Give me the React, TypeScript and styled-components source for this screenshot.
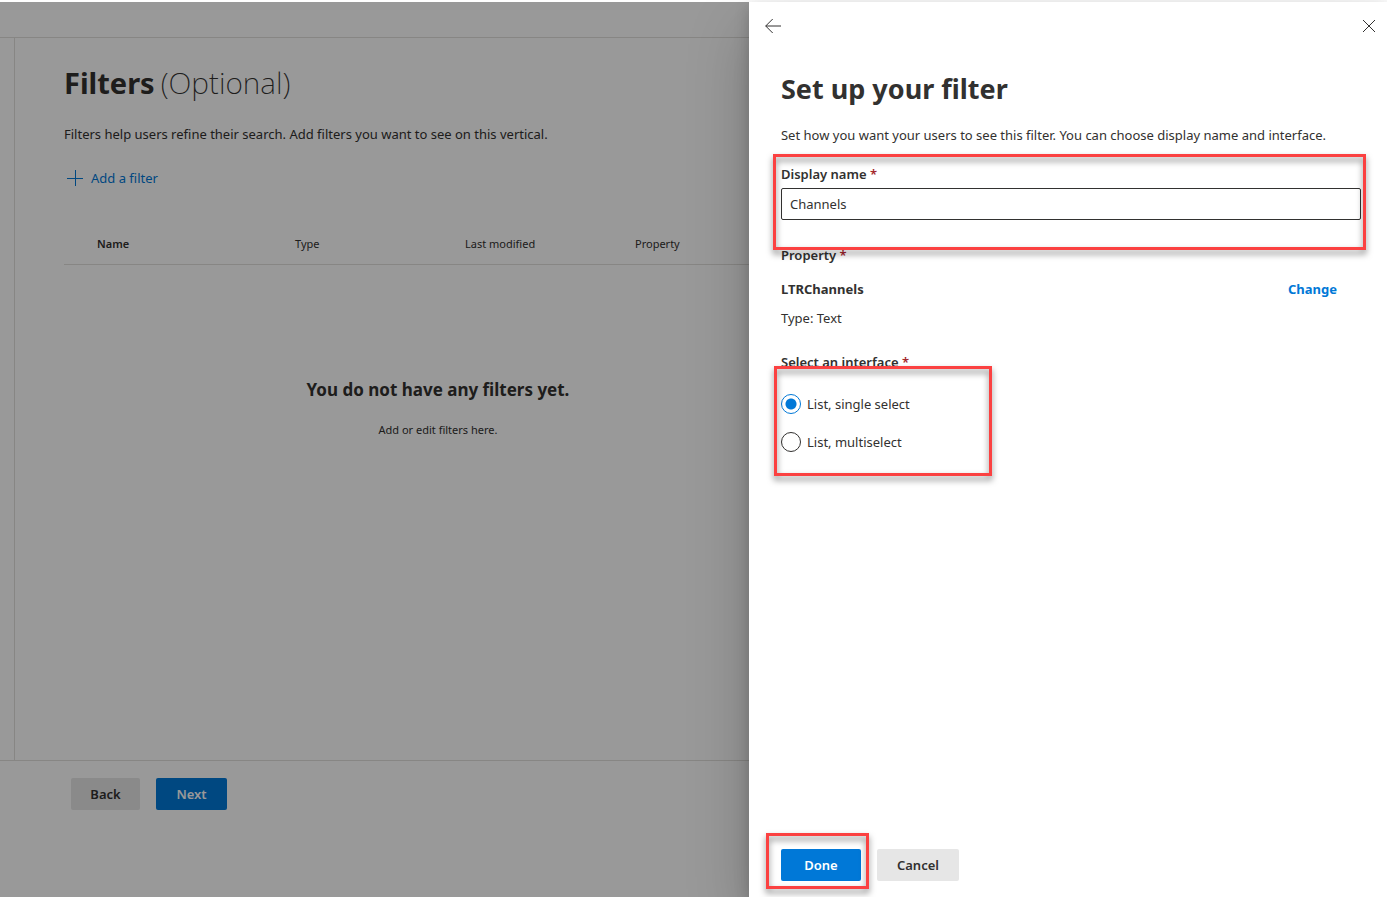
import React, { useState } from "react";
import styled, { createGlobalStyle } from "styled-components";

const GlobalStyle = createGlobalStyle`
  *, *::before, *::after { box-sizing: border-box; }
  body {
    margin: 0;
    background: #fff;
    color: #323130;
    font-family: "Noto Sans", "Open Sans", sans-serif;
    font-size: 13px;
    line-height: 20px;
  }
  h1, h2, h3, p { margin: 0; }
  button, input { font: inherit; color: inherit; }
`;

const Screen = styled.div`
  position: relative;
  display: flex;
  flex-direction: column;
  min-height: 100vh;
  overflow: hidden;
`;

const TopStrip = styled.div`
  height: 2px;
  background: #fff;
`;

const Wizard = styled.div`
  flex: 1;
  display: flex;
  flex-direction: column;
`;

const WizardHeader = styled.header`
  height: 36px;
  border-bottom: 1px solid #e1dfdd;
`;

const WizardBody = styled.main`
  flex: 1;
  margin-left: 14px;
  padding: 24px 0 0 49px;
  border-left: 1px solid #e1dfdd;
`;

const WizardTitle = styled.h1`
  display: flex;
  align-items: baseline;
  gap: 6px;
  font-size: 29px;
  line-height: 42px;
  font-weight: 700;
`;

const Light = styled.span`
  font-size: 30px;
  font-weight: 200;
`;

const Intro = styled.p`
  margin-top: 20px;
`;

const AddButton = styled.button`
  display: flex;
  align-items: center;
  gap: 8px;
  height: 40px;
  margin-top: 14px;
  padding: 0 3px;
  border: 0;
  background: none;
  color: #0078d7;
`;

const FilterList = styled.section`
  max-width: 748px;
`;

const Table = styled.table`
  width: 100%;
  margin-top: 24px;
  border-collapse: collapse;
  table-layout: fixed;
  font-size: 11px;
`;

const HeadCell = styled.th<{ $width?: number; $strong?: boolean; $indent?: boolean }>`
  width: ${(p) => (p.$width ? `${p.$width}px` : "auto")};
  height: 42px;
  padding: 2px 0 0 ${(p) => (p.$indent ? 33 : 0)}px;
  border-bottom: 1px solid #e1dfdd;
  text-align: left;
  font-weight: ${(p) => (p.$strong ? 600 : 400)};
`;

const Empty = styled.div`
  padding-top: 112px;
  text-align: center;
`;

const EmptyTitle = styled.h3`
  font-size: 17px;
  line-height: 26px;
  font-weight: 700;
`;

const EmptyText = styled.p`
  margin-top: 17px;
  font-size: 11px;
`;

const WizardFooter = styled.footer`
  display: flex;
  gap: 16px;
  height: 137px;
  padding: 17px 71px;
  border-top: 1px solid #e1dfdd;
`;

const Button = styled.button<{ $primary?: boolean; $width: number }>`
  width: ${(p) => p.$width}px;
  height: 32px;
  padding: 0;
  border: 0;
  border-radius: 2px;
  background: ${(p) => (p.$primary ? "#0078d7" : "#e6e6e6")};
  color: ${(p) => (p.$primary ? "#fff" : "#323130")};
  font-weight: 600;
`;

const Overlay = styled.div`
  position: absolute;
  inset: 2px 0 0;
  background: rgba(0, 0, 0, 0.4);
`;

const Panel = styled.aside`
  position: absolute;
  inset: 2px 0 0 auto;
  width: 46%;
  display: flex;
  flex-direction: column;
  background: #fff;
  box-shadow: 0 26px 58px rgba(0, 0, 0, 0.22), 0 5px 14px rgba(0, 0, 0, 0.18);
`;

const PanelNav = styled.div`
  display: flex;
  justify-content: space-between;
  padding: 8px 2px 0 8px;
`;

const IconButton = styled.button`
  display: flex;
  align-items: center;
  justify-content: center;
  width: 32px;
  height: 32px;
  padding: 0;
  border: 0;
  background: none;
`;

const PanelBody = styled.div`
  flex: 1;
  padding: 27px 26px 0 32px;
`;

const PanelTitle = styled.h2`
  font-size: 27px;
  line-height: 40px;
  font-weight: 700;
`;

const PanelIntro = styled.p`
  margin-top: 16px;
`;

const Field = styled.div`
  position: relative;
  margin-top: 19px;
`;

const Label = styled.label`
  display: block;
  font-weight: 600;
`;

const Star = styled.span`
  color: #a4262c;
`;

const TextInput = styled.input`
  display: block;
  width: 100%;
  height: 32px;
  margin-top: 4px;
  padding: 0 8px;
  border: 1px solid #323130;
  border-radius: 2px;
  background: #fff;
  outline: 0;
`;

const Property = styled.section`
  margin-top: 25px;
`;

const GroupTitle = styled.h3`
  font-size: 13px;
  line-height: 20px;
  font-weight: 600;
`;

const PropertyRow = styled.div`
  display: flex;
  justify-content: space-between;
  margin-top: 14px;
  padding-right: 24px;
  font-weight: 700;
`;

const ChangeLink = styled.a`
  color: #0078d7;
  text-decoration: none;
`;

const PropertyType = styled.p`
  margin-top: 9px;
`;

const Choices = styled.section`
  margin-top: 24px;
`;

const Options = styled.div`
  position: relative;
  display: flex;
  flex-direction: column;
  align-items: flex-start;
  gap: 18px;
  width: 203px;
  padding-top: 22px;
`;

const Option = styled.label`
  display: flex;
  align-items: center;
  gap: 6px;
`;

const Radio = styled.input`
  appearance: none;
  width: 20px;
  height: 20px;
  margin: 0;
  border: 1px solid #323130;
  border-radius: 50%;
  background: #fff;

  &:checked {
    border-color: #0078d7;
    background: radial-gradient(circle, #0078d7 5px, #fff 6px);
  }
`;

const PanelFooter = styled.footer`
  display: flex;
  gap: 16px;
  padding: 16px 32px;
`;

const ButtonSlot = styled.div`
  position: relative;
`;

const Callout = styled.div<{ $inset: string }>`
  position: absolute;
  inset: ${(p) => p.$inset};
  border: 3px solid #fb4141;
  filter: drop-shadow(0 4px 3px rgba(0, 0, 0, 0.5));
  pointer-events: none;
`;

export default function App() {
  const [name, setName] = useState("Channels");
  const [mode, setMode] = useState("single");

  return (
    <>
      <GlobalStyle />
      <Screen>
        <TopStrip />
        <Wizard>
          <WizardHeader />
          <WizardBody>
            <WizardTitle>
              <span>Filters</span>
              <Light>(Optional)</Light>
            </WizardTitle>
            <Intro>Filters help users refine their search. Add filters you want to see on this vertical.</Intro>
            <AddButton type="button">
              <svg width="16" height="16" viewBox="0 0 16 16" fill="none" stroke="currentColor" aria-hidden="true">
                <path d="M0 8.5H16M8.5 0V16" />
              </svg>
              Add a filter
            </AddButton>
            <FilterList>
              <Table>
                <thead>
                  <tr>
                    <HeadCell $width={231} $strong $indent>Name</HeadCell>
                    <HeadCell $width={170}>Type</HeadCell>
                    <HeadCell $width={170}>Last modified</HeadCell>
                    <HeadCell>Property</HeadCell>
                  </tr>
                </thead>
              </Table>
              <Empty>
                <EmptyTitle>You do not have any filters yet.</EmptyTitle>
                <EmptyText>Add or edit filters here.</EmptyText>
              </Empty>
            </FilterList>
          </WizardBody>
          <WizardFooter>
            <Button type="button" $width={69}>Back</Button>
            <Button type="button" $width={71} $primary>Next</Button>
          </WizardFooter>
        </Wizard>
        <Overlay />
        <Panel aria-label="Set up your filter">
          <PanelNav>
            <IconButton type="button" aria-label="Go back">
              <svg width="16" height="16" viewBox="0 0 16 16" fill="none" stroke="currentColor" aria-hidden="true">
                <path d="M16 8H0.7M7.7 1L0.7 8L7.7 15" />
              </svg>
            </IconButton>
            <IconButton type="button" aria-label="Close">
              <svg width="12" height="12" viewBox="0 0 12 12" fill="none" stroke="currentColor" aria-hidden="true">
                <path d="M0 0L12 12M12 0L0 12" />
              </svg>
            </IconButton>
          </PanelNav>
          <PanelBody>
            <PanelTitle>Set up your filter</PanelTitle>
            <PanelIntro>
              Set how you want your users to see this filter. You can choose display name and interface.
            </PanelIntro>
            <Field>
              <Label htmlFor="display-name">
                Display name <Star>*</Star>
              </Label>
              <TextInput id="display-name" value={name} onChange={(e) => setName(e.target.value)} />
              <Callout $inset="-10px -5px -30px -8px" />
            </Field>
            <Property>
              <GroupTitle>
                Property <Star>*</Star>
              </GroupTitle>
              <PropertyRow>
                <span>LTRChannels</span>
                <ChangeLink href="#change">Change</ChangeLink>
              </PropertyRow>
              <PropertyType>Type: Text</PropertyType>
            </Property>
            <Choices>
              <GroupTitle id="interface-label">
                Select an interface <Star>*</Star>
              </GroupTitle>
              <Options role="radiogroup" aria-labelledby="interface-label">
                <Option>
                  <Radio type="radio" name="mode" checked={mode === "single"} onChange={() => setMode("single")} />
                  List, single select
                </Option>
                <Option>
                  <Radio type="radio" name="mode" checked={mode === "multi"} onChange={() => setMode("multi")} />
                  List, multiselect
                </Option>
                <Callout $inset="-6px -8px -24px -7px" />
              </Options>
            </Choices>
          </PanelBody>
          <PanelFooter>
            <ButtonSlot>
              <Button type="button" $width={80} $primary>Done</Button>
              <Callout $inset="-16px -8px -8px -15px" />
            </ButtonSlot>
            <Button type="button" $width={82}>Cancel</Button>
          </PanelFooter>
        </Panel>
      </Screen>
    </>
  );
}
